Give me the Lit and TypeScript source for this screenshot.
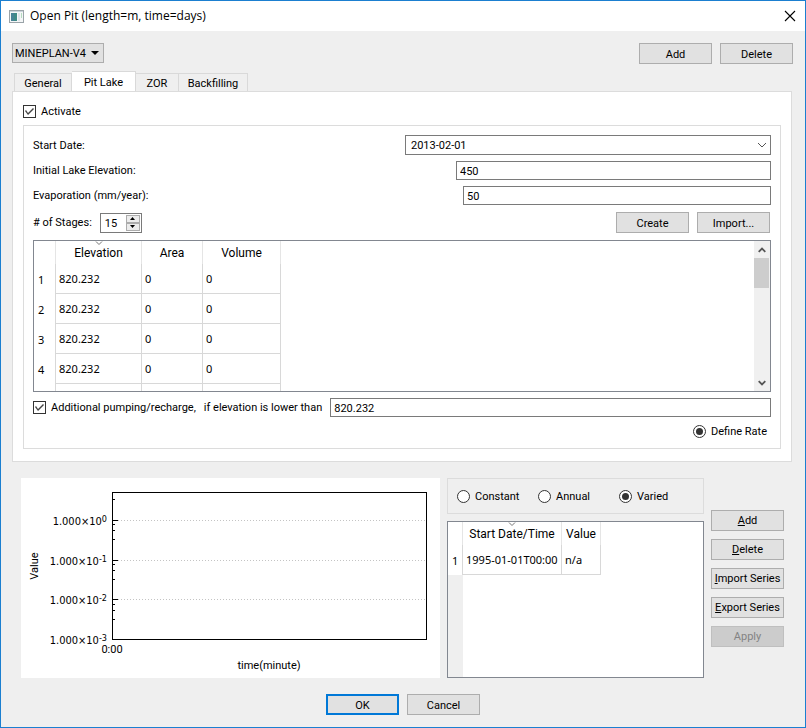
import { LitElement, html, svg, css } from "lit";
import { customElement, state } from "lit/decorators.js";
import { classMap } from "lit/directives/class-map.js";

const TABS = ["General", "Pit Lake", "ZOR", "Backfilling"];
const STAGES = [1, 2, 3, 4];
const MAJOR_TICKS = [
  { y: 42, exp: "0" },
  { y: 82, exp: "-1" },
  { y: 121, exp: "-2" },
  { y: 161, exp: "-3" },
];
const MINOR_TICKS = [21, 46, 52, 61, 86, 92, 101, 126, 132, 141];

@customElement("app-root")
export class AppRoot extends LitElement {
  @state() private tab = "Pit Lake";

  static styles = css`
    :host {
      display: block;
      font: 11px/15px Roboto, "Noto Sans", sans-serif;
      color: #000;
    }
    * {
      box-sizing: border-box;
    }
    button,
    input,
    select {
      font: inherit;
      color: inherit;
      margin: 0;
      border-radius: 0;
    }
    .window {
      display: flex;
      flex-direction: column;
      min-height: 100vh;
      border: 1px solid #1b7fd0;
      background: #efefef;
    }
    .titlebar {
      display: flex;
      align-items: center;
      gap: 6px;
      height: 30px;
      padding: 0 9px 0 8px;
      background: #fff;
    }
    .title {
      flex: 1;
      margin: 0;
      font: 12px/16px "Open Sans", sans-serif;
    }
    .close {
      display: flex;
      padding: 0;
      border: 0;
      background: none;
    }
    .toolbar {
      display: flex;
      gap: 8px;
      padding: 12px 12px 7px 11px;
    }
    .toolbar .combo {
      margin-right: auto;
    }
    .btn {
      width: 73px;
      height: 21px;
      padding: 1px 0 0;
      border: 1px solid #adadad;
      background: #e1e1e1;
      text-align: center;
      white-space: nowrap;
    }
    .btn:disabled {
      border-color: #bfbfbf;
      background: #ccc;
      color: #838383;
    }
    .btn.default {
      border: 2px solid #0078d7;
    }
    .combo {
      position: relative;
      display: flex;
      height: 20px;
    }
    .combo select {
      appearance: none;
      width: 100%;
      padding: 1px 16px 0 2px;
      border: 1px solid #adadad;
      background: #e1e1e1;
    }
    .combo.plan {
      width: 92px;
    }
    .combo.date select {
      padding-left: 5px;
      border-color: #7a7a7a;
      background: #fff;
    }
    .combo svg {
      position: absolute;
      right: 4px;
      top: 6px;
      pointer-events: none;
    }
    .tabs {
      display: flex;
      align-items: flex-end;
      height: 21px;
      padding-left: 13px;
      margin-bottom: -1px;
    }
    .tab {
      height: 19px;
      padding: 1px 0 0;
      border: 1px solid #d9d9d9;
      border-left-width: 0;
      background: #efefef;
    }
    .tab.first {
      width: 58px;
      border-left-width: 1px;
    }
    .tab.second {
      width: 64px;
    }
    .tab.third {
      width: 43px;
    }
    .tab.fourth {
      width: 69px;
    }
    .tab.selected {
      height: 21px;
      border-bottom-color: #fff;
      background: #fff;
    }
    .panel {
      margin: 0 13px 0 11px;
      padding: 12px 10px;
      border: 1px solid #dcdcdc;
      background: #fff;
    }
    .choice {
      display: flex;
      align-items: center;
      gap: 5px;
      white-space: nowrap;
    }
    .choice input {
      position: relative;
      appearance: none;
      flex: none;
      width: 13px;
      height: 13px;
      border: 1px solid #333;
      background: #fff;
    }
    .choice input[type="checkbox"]:checked::before {
      content: "";
      position: absolute;
      inset: 0;
      background: #444;
      clip-path: polygon(1px 5px, 2px 4px, 4px 7px, 9px 2px, 10px 3px, 4px 9px);
    }
    .choice input[type="radio"] {
      border-radius: 50%;
    }
    .choice input[type="radio"]:checked::before {
      content: "";
      position: absolute;
      inset: 2px;
      border-radius: 50%;
      background: #333;
    }
    .group {
      display: flex;
      flex-direction: column;
      gap: 6px;
      margin-top: 6px;
      padding: 9px;
      border: 1px solid #dcdcdc;
    }
    .row {
      display: grid;
      align-items: center;
    }
    .row.date {
      grid-template-columns: 1fr 1fr;
      gap: 6px;
    }
    .row.elevation {
      grid-template-columns: 423fr 315fr;
    }
    .row.evaporation {
      grid-template-columns: 430fr 308fr;
    }
    .field {
      width: 100%;
      min-width: 0;
      height: 19px;
      padding: 1px 3px 0;
      border: 1px solid #7a7a7a;
      background: #fff;
    }
    .stages {
      display: flex;
      gap: 8px;
      align-items: center;
      padding: 1px 1px 1px 0;
    }
    .stages .spin {
      margin-right: auto;
    }
    .spin {
      display: flex;
      width: 42px;
      height: 20px;
      border: 1px solid #7a7a7a;
      background: #fff;
    }
    .spin input {
      appearance: textfield;
      flex: 1;
      min-width: 0;
      padding: 1px 4px 0;
      border: 0;
      background: none;
    }
    .spin input::-webkit-inner-spin-button {
      appearance: none;
      margin: 0;
    }
    .steps {
      display: grid;
      grid-template-rows: 1fr 1fr;
      width: 15px;
      padding: 1px 1px 1px 0;
    }
    .step {
      display: flex;
      align-items: center;
      justify-content: center;
      padding: 0;
      border: 1px solid #acacac;
      background: #ececec;
    }
    .frame {
      display: flex;
      border: 1px solid #828790;
      background: #fff;
      overflow: hidden;
    }
    .frame.stagelist {
      height: 152px;
    }
    .view {
      flex: 1;
      overflow: hidden;
    }
    table {
      border-collapse: separate;
      border-spacing: 0;
      table-layout: fixed;
      text-align: left;
    }
    .stagelist table {
      width: 247px;
    }
    .series table {
      width: 153px;
    }
    th,
    td {
      height: 30px;
      padding: 0 3px;
      border: 0 solid #d8d8d8;
      border-right-width: 1px;
      font-weight: 400;
      white-space: nowrap;
    }
    tbody {
      font-family: "Noto Sans", sans-serif;
    }
    td {
      border-bottom-width: 1px;
    }
    tbody th {
      padding: 0 4px;
    }
    thead th {
      position: relative;
      height: 23px;
      padding: 1px 0 0;
      border-color: #e5e5e5;
      font-size: 12px;
      text-align: center;
    }
    .sort {
      position: absolute;
      left: 50%;
      top: 0;
      margin-left: -4px;
    }
    .c-num {
      width: 22px;
    }
    .c-elev {
      width: 86px;
    }
    .c-area {
      width: 61px;
    }
    .c-vol {
      width: 78px;
    }
    .c-row {
      width: 15px;
    }
    .c-time {
      width: 99px;
    }
    .c-val {
      width: 39px;
    }
    .scrollbar {
      display: flex;
      flex-direction: column;
      width: 16px;
      background: #f0f0f0;
    }
    .arrow {
      display: flex;
      justify-content: center;
      align-items: center;
      height: 17px;
      padding: 0;
      border: 0;
      background: none;
    }
    .track {
      flex: 1;
    }
    .thumb {
      width: 15px;
      height: 30px;
      background: #cdcdcd;
    }
    .extra {
      display: flex;
      align-items: center;
      gap: 8px;
      white-space: nowrap;
    }
    .rate {
      align-self: flex-end;
      padding: 1px 4px 0 0;
    }
    .lower {
      display: grid;
      grid-template-columns: 419fr 257fr 73px;
      gap: 7px;
      padding: 16px 21px 16px 20px;
    }
    .chart {
      display: block;
      width: 100%;
      background: #fff;
    }
    .line {
      fill: none;
      stroke: #000;
    }
    .grid {
      stroke: #c4c4c4;
      stroke-dasharray: 1 2;
    }
    .end {
      font-family: "DejaVu Sans Condensed", sans-serif;
      text-anchor: end;
    }
    .mid {
      text-anchor: middle;
    }
    .sup {
      font-size: 9px;
    }
    .right {
      display: flex;
      flex-direction: column;
      gap: 7px;
      min-width: 0;
    }
    .modes {
      display: grid;
      grid-template-columns: 81px 81px 1fr;
      align-items: center;
      height: 36px;
      padding: 0 9px;
      border: 1px solid #dcdcdc;
    }
    .frame.series {
      flex: 1;
      background: linear-gradient(to right, #efefef 15px, #fff 15px);
    }
    .series table {
      background: #fff;
    }
    .actions {
      display: flex;
      flex-direction: column;
      justify-content: center;
      gap: 8px;
    }
    .footer {
      display: flex;
      justify-content: center;
      gap: 8px;
      padding-bottom: 12px;
    }
  `;

  private sortMark() {
    return html`<svg class="sort" width="8" height="5" viewBox="0 0 8 5">
      <path d="M1 .5L4 3.5L7 .5" fill="none" stroke="#777" />
    </svg>`;
  }

  private chart() {
    return html`<svg class="chart" viewBox="0 0 419 200" role="img" aria-label="Value over time">
      ${MAJOR_TICKS.slice(0, 3).map(
        (t) => svg`<line class="grid" x1="97" x2="405" y1=${t.y + 0.5} y2=${t.y + 0.5} />`
      )}
      <rect class="line" x="91.5" y="14.5" width="314" height="147" />
      ${MAJOR_TICKS.map(
        (t) => svg`<line class="line" x1="91" x2="97" y1=${t.y + 0.5} y2=${t.y + 0.5} />
          <text class="end" x="86" y=${t.y + 5}>1.000×10<tspan class="sup" dy="-3">${t.exp}</tspan></text>`
      )}
      ${MINOR_TICKS.map(
        (y) => svg`<line class="line" x1="91" x2="94" y1=${y + 0.5} y2=${y + 0.5} />`
      )}
      <text class="mid" x="91" y="175">0:00</text>
      <text class="mid" x="248" y="191">time(minute)</text>
      <text class="mid" transform="translate(17 88) rotate(-90)">Value</text>
    </svg>`;
  }

  render() {
    const order = ["first", "second", "third", "fourth"];
    return html`
      <div class="window">
        <header class="titlebar">
          <svg width="15" height="13" viewBox="0 0 15 13">
            <rect x=".5" y=".5" width="14" height="12" fill="#f4f6f7" stroke="#9aa3a8" />
            <rect x="1" y="1" width="13" height="1" fill="#c9d3da" />
            <rect x="2" y="3" width="6" height="8" fill="#3f8a86" />
            <rect x="2" y="3" width="3" height="8" fill="#4c7fa0" opacity=".6" />
            <rect x="9" y="3" width="2" height="8" fill="#dfe5ea" />
            <rect x="12" y="3" width="1" height="5" fill="#b5dcc0" />
          </svg>
          <h1 class="title">Open Pit (length=m, time=days)</h1>
          <button class="close" aria-label="Close">
            <svg width="12" height="12" viewBox="0 0 12 12">
              <path d="M1 1L11 11M11 1L1 11" stroke="#000" stroke-width="1.1" />
            </svg>
          </button>
        </header>

        <div class="toolbar">
          <div class="combo plan">
            <select aria-label="Plan"><option>MINEPLAN-V4</option></select>
            <svg width="9" height="8" viewBox="0 0 9 8"><path d="M0 2H8L4 6Z" /></svg>
          </div>
          <button class="btn">Add</button>
          <button class="btn">Delete</button>
        </div>

        <div class="tabs" role="tablist">
          ${TABS.map(
            (t, i) => html`<button
              role="tab"
              aria-selected=${t === this.tab}
              class=${classMap({ tab: true, [order[i]]: true, selected: t === this.tab })}
              @click=${() => (this.tab = t)}
            >${t}</button>`
          )}
        </div>

        <main class="panel">
          <label class="choice"><input type="checkbox" checked />Activate</label>
          <section class="group">
            <div class="row date">
              <label for="start">Start Date:</label>
              <div class="combo date">
                <select id="start"><option>2013-02-01</option></select>
                <svg width="10" height="8" viewBox="0 0 10 8">
                  <path d="M1 2L5 6L9 2" fill="none" stroke="#555" />
                </svg>
              </div>
            </div>
            <div class="row elevation">
              <label for="elev">Initial Lake Elevation:</label>
              <input class="field" id="elev" value="450" />
            </div>
            <div class="row evaporation">
              <label for="evap">Evaporation (mm/year):</label>
              <input class="field" id="evap" value="50" />
            </div>
            <div class="stages">
              <label for="count"># of Stages:</label>
              <div class="spin">
                <input id="count" type="number" value="15" />
                <div class="steps">
                  <button class="step" aria-label="More">
                    <svg width="5" height="3" viewBox="0 0 5 3"><path d="M0 3L2.500 0L5 3Z" /></svg>
                  </button>
                  <button class="step" aria-label="Fewer">
                    <svg width="5" height="3" viewBox="0 0 5 3"><path d="M0 0L2.500 3L5 0Z" /></svg>
                  </button>
                </div>
              </div>
              <button class="btn">Create</button>
              <button class="btn">Import...</button>
            </div>
            <div class="frame stagelist">
              <div class="view">
                <table>
                  <thead>
                    <tr>
                      <th class="c-num"></th>
                      <th class="c-elev">${this.sortMark()}Elevation</th>
                      <th class="c-area">Area</th>
                      <th class="c-vol">Volume</th>
                    </tr>
                  </thead>
                  <tbody>
                    ${STAGES.map(
                      (n) => html`<tr><th>${n}</th><td>820.232</td><td>0</td><td>0</td></tr>`
                    )}
                    <tr><th></th><td></td><td></td><td></td></tr>
                  </tbody>
                </table>
              </div>
              <div class="scrollbar">
                <button class="arrow" aria-label="Scroll up">
                  <svg width="8" height="6" viewBox="0 0 8 6">
                    <path d="M.7 4.800L4 1.500L7.300 4.800" fill="none" stroke="#555" stroke-width="1.8" />
                  </svg>
                </button>
                <div class="track"><div class="thumb"></div></div>
                <button class="arrow" aria-label="Scroll down">
                  <svg width="8" height="6" viewBox="0 0 8 6">
                    <path d="M.7 1.200L4 4.500L7.300 1.200" fill="none" stroke="#555" stroke-width="1.8" />
                  </svg>
                </button>
              </div>
            </div>
            <div class="extra">
              <label class="choice"><input type="checkbox" checked />Additional pumping/recharge,</label>
              <label for="limit">if elevation is lower than</label>
              <input class="field" id="limit" value="820.232" />
            </div>
            <label class="choice rate"><input type="radio" name="rate" checked />Define Rate</label>
          </section>
        </main>

        <section class="lower">
          ${this.chart()}
          <div class="right">
            <div class="modes">
              <label class="choice"><input type="radio" name="mode" />Constant</label>
              <label class="choice"><input type="radio" name="mode" />Annual</label>
              <label class="choice"><input type="radio" name="mode" checked />Varied</label>
            </div>
            <div class="frame series">
              <div class="view">
                <table>
                  <thead>
                    <tr>
                      <th class="c-row"></th>
                      <th class="c-time">${this.sortMark()}Start Date/Time</th>
                      <th class="c-val">Value</th>
                    </tr>
                  </thead>
                  <tbody>
                    <tr><th>1</th><td>1995-01-01T00:00</td><td>n/a</td></tr>
                  </tbody>
                </table>
              </div>
            </div>
          </div>
          <div class="actions">
            <button class="btn"><u>A</u>dd</button>
            <button class="btn"><u>D</u>elete</button>
            <button class="btn"><u>I</u>mport Series</button>
            <button class="btn"><u>E</u>xport Series</button>
            <button class="btn" disabled>Apply</button>
          </div>
        </section>

        <footer class="footer">
          <button class="btn default">OK</button>
          <button class="btn">Cancel</button>
        </footer>
      </div>
    `;
  }
}
